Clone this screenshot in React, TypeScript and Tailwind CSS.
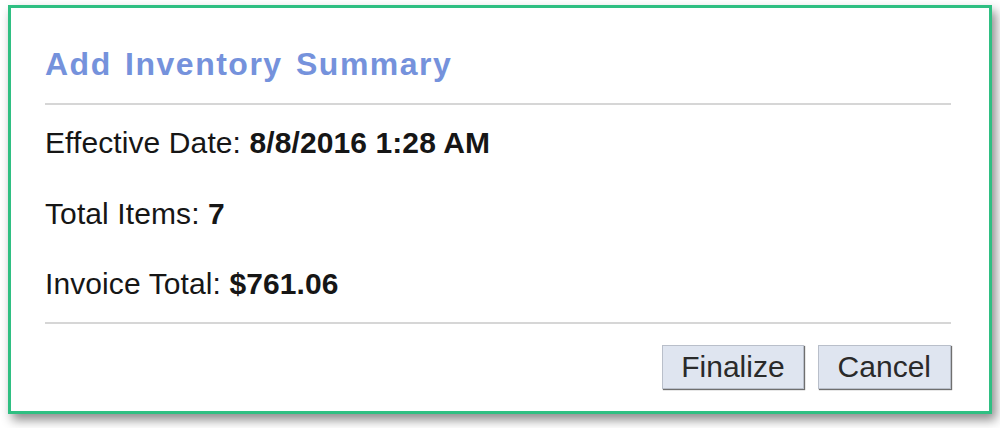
import React from "react";

const rows = [
  { label: "Effective Date:", value: "8/8/2016 1:28 AM" },
  { label: "Total Items:", value: "7" },
  { label: "Invoice Total:", value: "$761.06" },
];

const App = () => {
  return (
    <div className="w-[1000px] h-[428px] bg-white overflow-hidden font-['Liberation_Sans',Arial,sans-serif]">
      {/* dialog */}
      <div className="ml-[8px] mt-[5px] w-[984px] h-[409px] border-[3px] border-[#2fbf82] bg-white shadow-[4px_6px_10px_rgba(0,0,0,0.45)] pl-[34px] pr-[38px] pt-[40px] flex flex-col">
        <h1 className="text-[32px] leading-[32px] font-bold text-[#7592dc] tracking-[1.5px] [word-spacing:3px]">
          Add Inventory Summary
        </h1>
        <div className="mt-[23px] h-[2px] bg-[#d6d6d6]" />

        <div className="mt-[23px] flex flex-col gap-[40.5px] text-[30px] leading-[30px] text-[#161616]">
          {rows.map((r) => (
            <p key={r.label} className="tracking-[0.1px]">
              {r.label} <span className="font-bold">{r.value}</span>
            </p>
          ))}
        </div>

        <div className="mt-[23px] h-[2px] bg-[#d6d6d6]" />

        {/* buttons */}
        <div className="mt-[21px] flex justify-end gap-[14px]">
          <button className="h-[44px] px-[18px] bg-[#dfe5f0] border border-[#b9bfca] shadow-[1px_1px_1px_#6f6f6f] text-[30px] leading-[30px] text-[#2a2a2a]">
            Finalize
          </button>
          <button className="h-[44px] px-[19px] bg-[#dfe5f0] border border-[#b9bfca] shadow-[1px_1px_1px_#6f6f6f] text-[30px] leading-[30px] text-[#2a2a2a]">
            Cancel
          </button>
        </div>
      </div>
    </div>
  );
};

export default App;
